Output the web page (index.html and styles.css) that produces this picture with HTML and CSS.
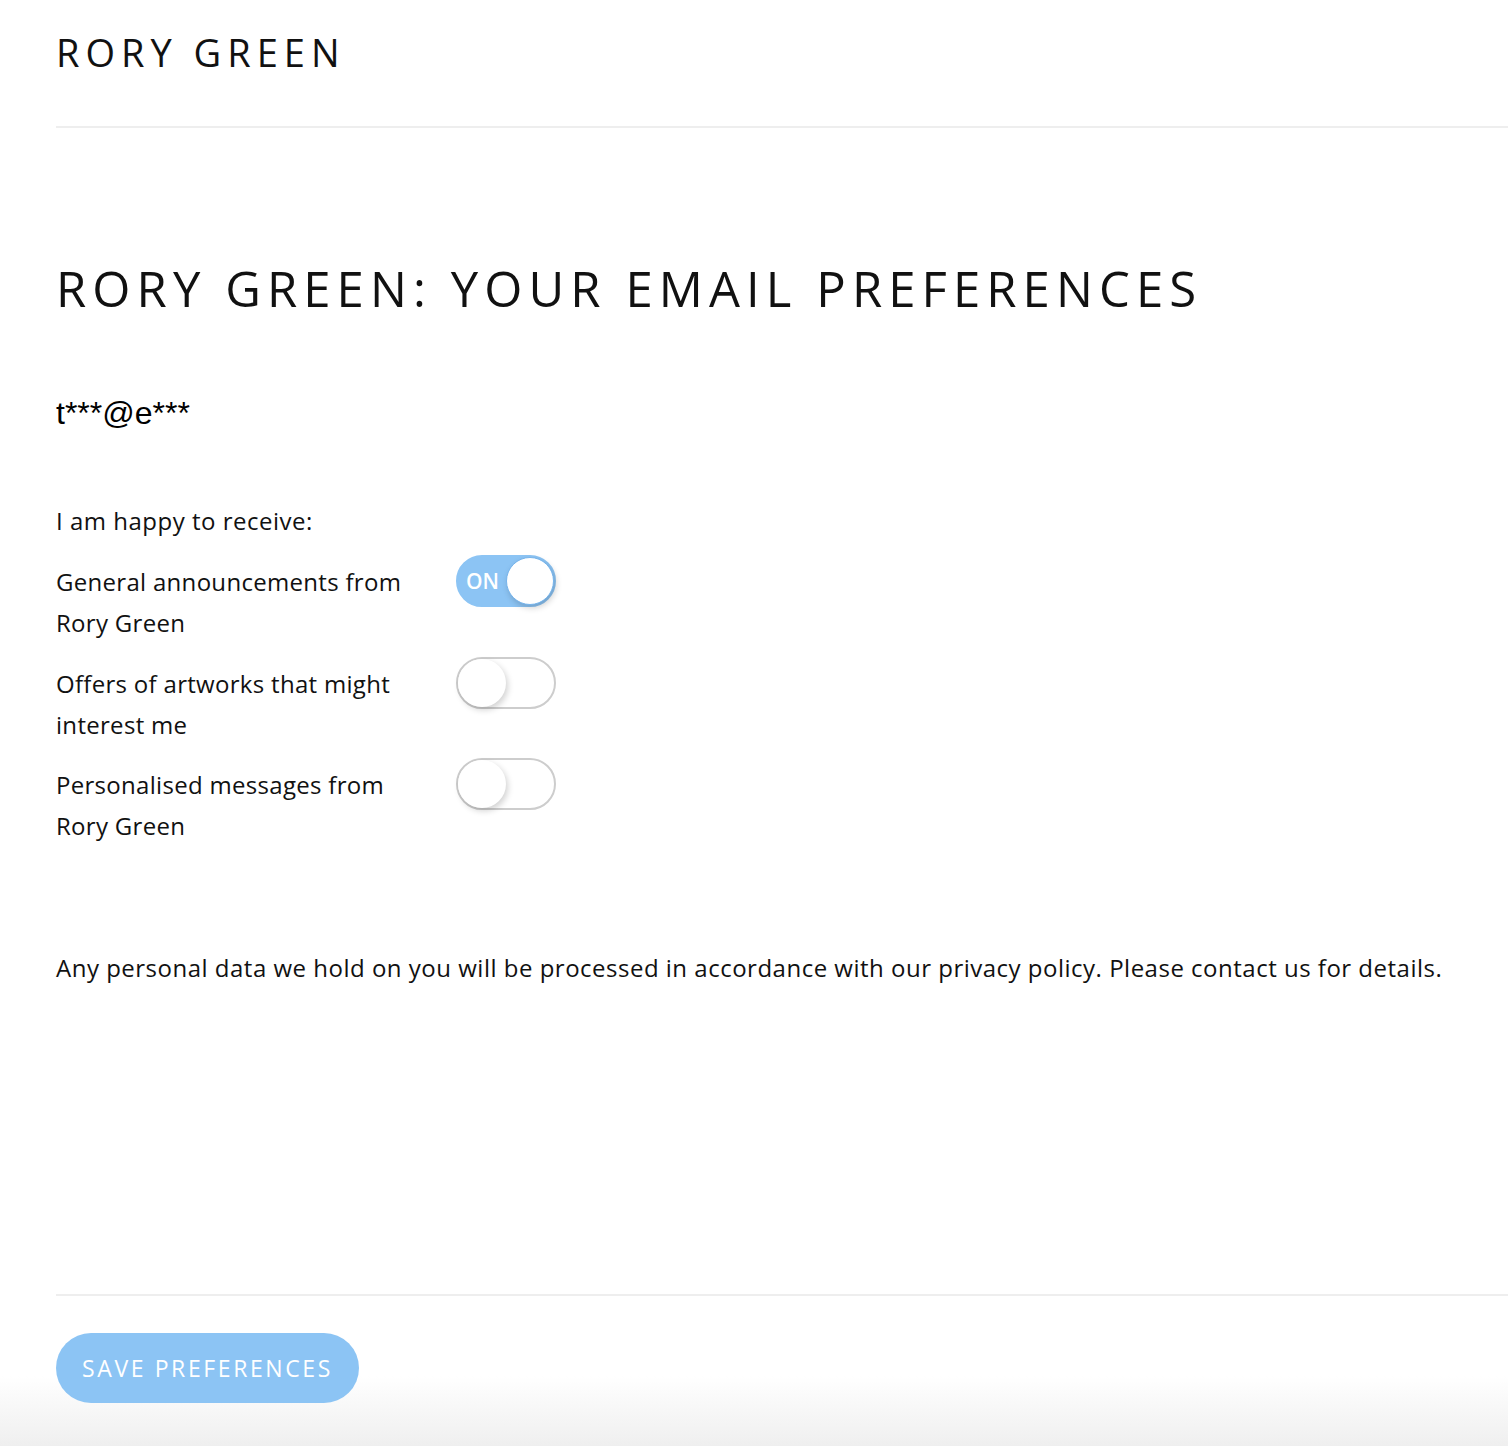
FILE: index.html
```html
<!DOCTYPE html>
<html lang="en">
<head>
<meta charset="utf-8">
<title>Rory Green: Your Email Preferences</title>
<link rel="stylesheet" href="styles.css">
</head>
<body>
<div class="page">
  <header class="site-header">
    <div class="brand">RORY GREEN</div>
  </header>
  <main class="content">
    <h1 class="title">RORY GREEN: YOUR EMAIL PREFERENCES</h1>
    <div class="email">t***@e***</div>
    <p class="intro">I am happy to receive:</p>
    <div class="prefs">
      <div class="pref-row">
        <div class="pref-label">General announcements from Rory Green</div>
        <div class="toggle toggle-on"><span class="toggle-text">ON</span><span class="knob"></span></div>
      </div>
      <div class="pref-row">
        <div class="pref-label">Offers of artworks that might interest me</div>
        <div class="toggle"><span class="knob"></span></div>
      </div>
      <div class="pref-row">
        <div class="pref-label">Personalised messages from Rory Green</div>
        <div class="toggle"><span class="knob"></span></div>
      </div>
    </div>
    <p class="privacy">Any personal data we hold on you will be processed in accordance with our privacy policy. Please contact us for details.</p>
  </main>
  <footer class="actions">
    <button class="save-btn" type="button">SAVE PREFERENCES</button>
  </footer>
</div>
</body>
</html>
```
FILE: styles.css
```css
html {
  min-height: 100%;
  background: linear-gradient(to bottom, #ffffff calc(100% - 70px), #efefef 100%);
}
body {
  margin: 0;
  font-family: "Open Sans", Lato, "Liberation Sans", sans-serif;
  color: #111;
}
.page {
  margin-left: 56px;
}
.site-header {
  padding-top: 33px;
  height: 93px;
  border-bottom: 2px solid #eeeeee;
}
.brand {
  font-size: 38px;
  line-height: 38px;
  letter-spacing: 6px;
  font-weight: 400;
}
.content {
  padding-bottom: 306px;
  border-bottom: 2px solid #eeeeee;
}
.title {
  margin: 136px 0 0;
  font-size: 49px;
  line-height: 49px;
  font-weight: 400;
  letter-spacing: 6.1px;
}
.email {
  margin-top: 85px;
  font-family: "Liberation Sans", Arial, sans-serif;
  font-size: 32px;
  line-height: 30px;
  color: #000;
}
.intro {
  margin: 72px 0 0;
  font-size: 24px;
  line-height: 41px;
  letter-spacing: 0.5px;
}
.prefs {
  margin-top: 14px;
  display: flex;
  flex-direction: column;
  gap: 13.5px;
}
.pref-row {
  display: flex;
  align-items: flex-start;
  gap: 40px;
}
.pref-label {
  width: 360px;
  padding-top: 6px;
  font-size: 24px;
  line-height: 41px;
  letter-spacing: 0.3px;
}
.toggle {
  position: relative;
  box-sizing: border-box;
  width: 100px;
  height: 52px;
  border-radius: 26px;
  border: 2px solid #cdcdcd;
  background: #fff;
}
.toggle .knob {
  position: absolute;
  top: 0;
  left: 0;
  width: 48px;
  height: 48px;
  border-radius: 50%;
  background: #fff;
  box-shadow: 2px 3px 6px rgba(0, 0, 0, 0.18);
}
.toggle-on {
  background: #8cc4f4;
  border-color: #8cc4f4;
}
.toggle-on .knob {
  left: auto;
  right: 0;
  box-sizing: border-box;
  border: 1.5px solid #76b4ec;
}
.toggle-text {
  position: absolute;
  left: 8px;
  top: 0;
  line-height: 48px;
  font-size: 21px;
  font-weight: 600;
  color: #fff;
}
.privacy {
  margin: 101px 0 0;
  font-size: 24px;
  line-height: 41px;
  letter-spacing: 0.5px;
}
.actions {
  padding-top: 37px;
}
.save-btn {
  width: 303px;
  height: 70px;
  border: none;
  border-radius: 35px;
  background: #8cc4f4;
  color: #fff;
  font-family: "Open Sans", Lato, "Liberation Sans", sans-serif;
  font-size: 23px;
  letter-spacing: 2.6px;
  padding: 0;
}
```
